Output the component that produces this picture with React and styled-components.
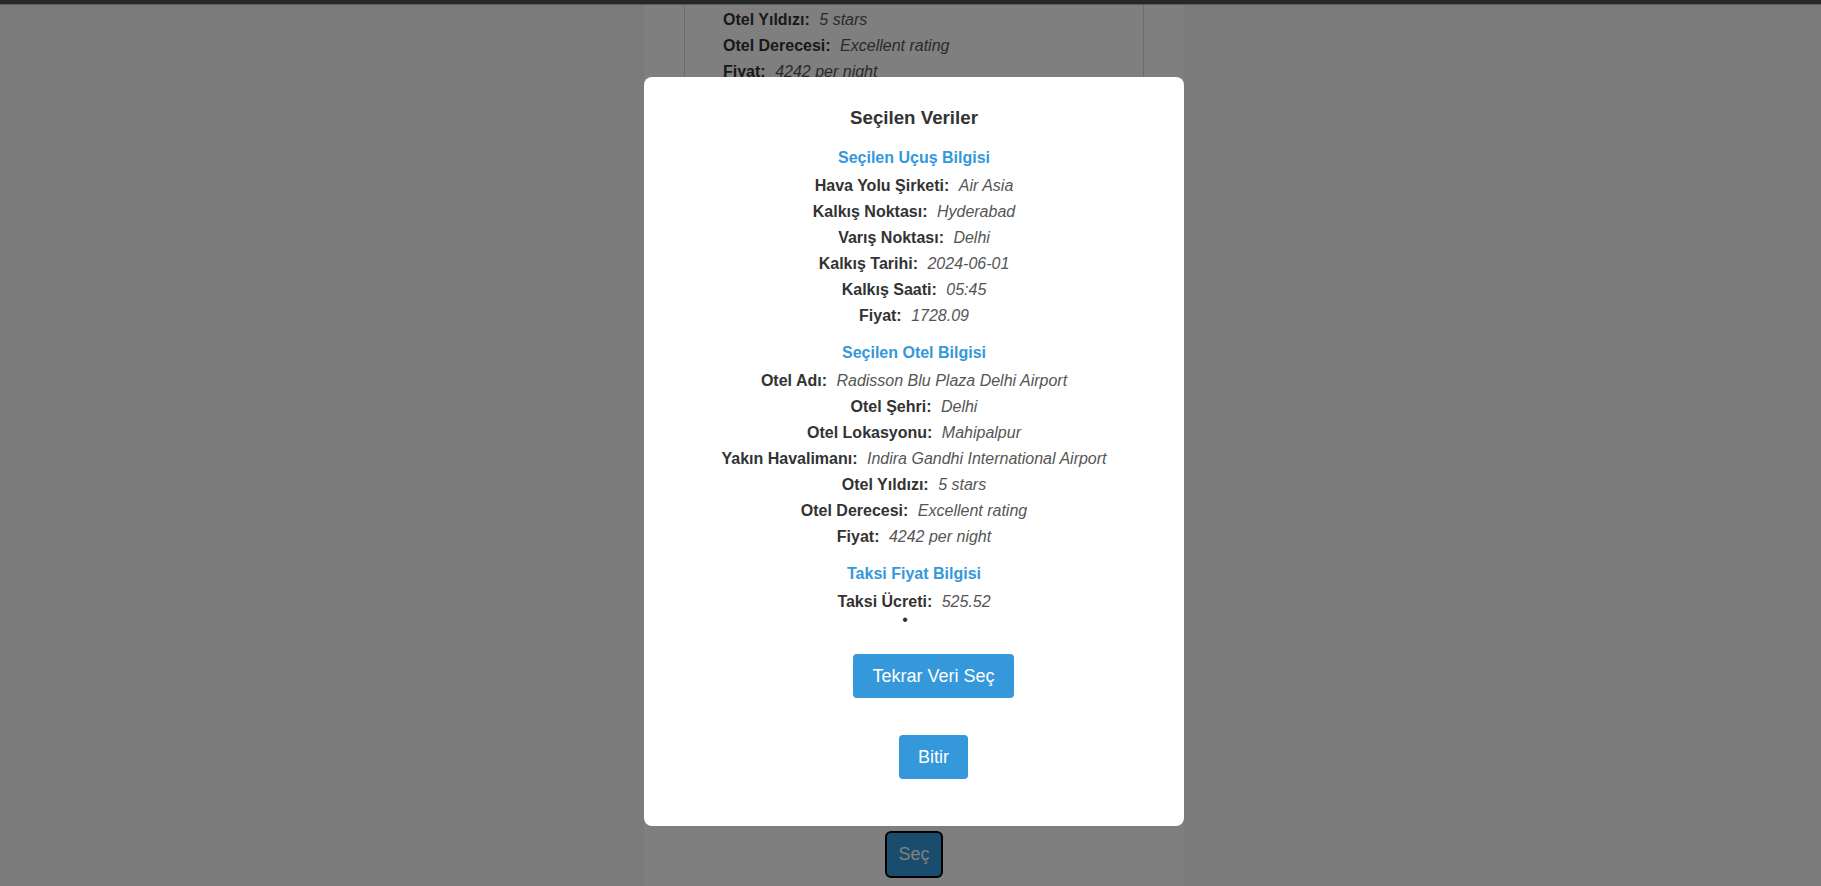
import React from "react";
import styled, { createGlobalStyle } from "styled-components";

const GlobalStyle = createGlobalStyle`
  html, body {
    margin: 0;
    padding: 0;
    height: 100%;
    overflow: hidden;
  }
  body {
    background: #f6f6f6;
    font-family: "Liberation Sans", Arial, sans-serif;
  }
`;

const Page = styled.div`
  padding-left: 7px;
`;

const TopBar = styled.div`
  height: 4px;
  margin-left: -7px;
  background: #4a5258;
  border-bottom: 1px solid #b8b8b8;
`;

const Column = styled.main`
  width: 540px;
  margin: 0 auto;
  background: #ffffff;
  min-height: calc(100vh - 5px);
  display: flex;
  flex-direction: column;
  align-items: center;
`;

const HotelCard = styled.ul`
  align-self: stretch;
  list-style: none;
  margin: 0 40px;
  height: 790px;
  box-sizing: border-box;
  border: 1px solid #d6d6d6;
  border-top: none;
  padding: 6px 0 0 38px;
`;

const CardRow = styled.li`
  margin: 0 0 8px;
  font-size: 16px;
  line-height: 18px;
  color: #333;
`;

const Label = styled.strong`
  margin-right: 5px;
  color: #333;
`;

const Value = styled.em`
  color: #555;
`;

const SelectButton = styled.button`
  margin-top: 36px;
  background: #3498db;
  color: #fff;
  border: 2px solid #000;
  border-radius: 6px;
  font-family: inherit;
  font-size: 18px;
  line-height: 21px;
  padding: 11px 11px;
`;

const Overlay = styled.div`
  position: fixed;
  inset: 0;
  background: rgba(0, 0, 0, 0.5);
  display: flex;
  justify-content: center;
  align-items: flex-start;
  padding: 77px 0 0 7px;
  box-sizing: border-box;
`;

const Modal = styled.div`
  width: 540px;
  box-sizing: border-box;
  background: #fff;
  border-radius: 8px;
  padding: 30px 20px 47px;
  display: flex;
  flex-direction: column;
  text-align: center;
`;

const ModalTitle = styled.h3`
  margin: 0;
  font-size: 18.72px;
  line-height: 22px;
  font-weight: bold;
  color: #333;
`;

const Section = styled.section`
  margin-top: ${(p) => (p.$first ? 20 : 11)}px;
  display: flex;
  flex-direction: column;
`;

const SectionTitle = styled.h4`
  margin: 0 0 10px;
  font-size: 16px;
  line-height: 18px;
  font-weight: bold;
  color: #3498db;
`;

const InfoRow = styled.p`
  margin: 0 0 ${(p) => (p.$tight ? 0 : 8)}px;
  font-size: 16px;
  line-height: 18px;
  color: #333;
`;

const Bullet = styled.div`
  font-size: 16px;
  line-height: 18px;
  color: #333;
  span {
    padding-right: 18px;
  }
`;

const ActionButton = styled.button`
  align-self: center;
  margin-top: ${(p) => p.$gap}px;
  margin-left: 39px;
  background: #3498db;
  color: #fff;
  border: none;
  border-radius: 4px;
  font-family: inherit;
  font-size: 18px;
  line-height: 20px;
  padding: 12px 19px;
  cursor: pointer;
`;

const flight = [
  ["Hava Yolu Şirketi:", "Air Asia"],
  ["Kalkış Noktası:", "Hyderabad"],
  ["Varış Noktası:", "Delhi"],
  ["Kalkış Tarihi:", "2024-06-01"],
  ["Kalkış Saati:", "05:45"],
  ["Fiyat:", "1728.09"],
];

const hotel = [
  ["Otel Adı:", "Radisson Blu Plaza Delhi Airport"],
  ["Otel Şehri:", "Delhi"],
  ["Otel Lokasyonu:", "Mahipalpur"],
  ["Yakın Havalimanı:", "Indira Gandhi International Airport"],
  ["Otel Yıldızı:", "5 stars"],
  ["Otel Derecesi:", "Excellent rating"],
  ["Fiyat:", "4242 per night"],
];

const background = [
  ["Otel Yıldızı:", "5 stars"],
  ["Otel Derecesi:", "Excellent rating"],
  ["Fiyat:", "4242 per night"],
];

function Rows({ items }) {
  return items.map(([l, v], i) => (
    <InfoRow key={i}>
      <Label>{l}</Label> <Value>{v}</Value>
    </InfoRow>
  ));
}

export default function App() {
  return (
    <>
      <GlobalStyle />
      <Page>
        <TopBar />
        <Column>
          <HotelCard>
            {background.map(([l, v], i) => (
              <CardRow key={i}>
                <Label>{l}</Label> <Value>{v}</Value>
              </CardRow>
            ))}
          </HotelCard>
          <SelectButton>Seç</SelectButton>
        </Column>
      </Page>
      <Overlay>
        <Modal>
          <ModalTitle>Seçilen Veriler</ModalTitle>
          <Section $first>
            <SectionTitle>Seçilen Uçuş Bilgisi</SectionTitle>
            <Rows items={flight} />
          </Section>
          <Section>
            <SectionTitle>Seçilen Otel Bilgisi</SectionTitle>
            <Rows items={hotel} />
          </Section>
          <Section>
            <SectionTitle>Taksi Fiyat Bilgisi</SectionTitle>
            <InfoRow $tight>
              <Label>Taksi Ücreti:</Label> <Value>525.52</Value>
            </InfoRow>
            <Bullet>
              <span>•</span>
            </Bullet>
          </Section>
          <ActionButton $gap={25}>Tekrar Veri Seç</ActionButton>
          <ActionButton $gap={37}>Bitir</ActionButton>
        </Modal>
      </Overlay>
    </>
  );
}
